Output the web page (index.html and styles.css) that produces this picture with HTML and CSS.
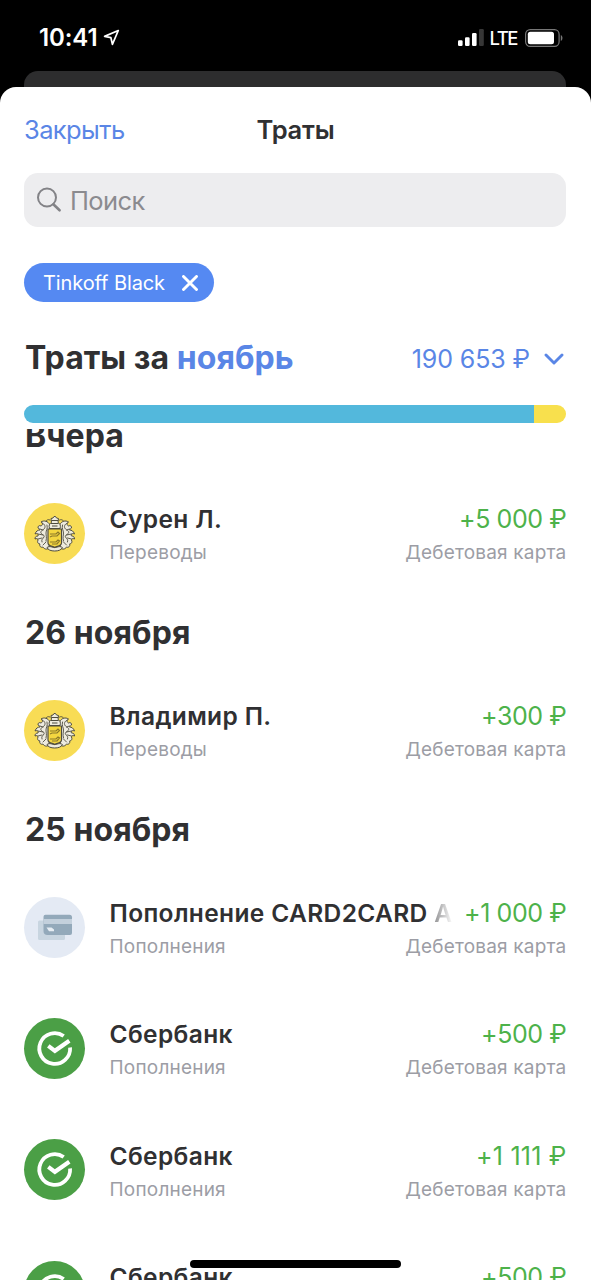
FILE: index.html
```html
<!DOCTYPE html>
<html lang="ru">
<head>
<meta charset="utf-8">
<title>Траты</title>
<link rel="stylesheet" href="styles.css">
</head>
<body>
<svg class="defs" aria-hidden="true">
  <symbol id="wing" viewBox="0 0 61 61" overflow="visible">
    <path d="M26 22c-2-4-6-5-9-3 2 1 2 3 0 4-2-1-3 0-3 2 1 1 2 1 2 2-2 0-4 1-5 4 2-1 4 0 3 2-2 0-3 1-3 3 2-1 3 0 3 1-1 2 0 4 2 4-1 2 1 4 3 3 1 2 4 3 6 1z" fill="#eeebdf" stroke="#4f4d40" stroke-width="1" stroke-linejoin="round"/>
    <path d="M18 20c3 1 4 4 2 6s-4 2-3 4 4 2 3 4-3 2-2 5M23 22c1 4-1 5-1 8s1 4 0 8M14 31l5 1M14 36l4-1M16 26l3 1M19 42l3-3M26 17c-2-1-3 0-4 1" fill="none" stroke="#4f4d40" stroke-width=".9" stroke-linecap="round"/>
  </symbol>
  <symbol id="crest" viewBox="0 0 61 61">
    <use href="#wing" width="61" height="61"/>
    <use href="#wing" width="61" height="61" transform="translate(61.500 0) scale(-1 1)"/>
    <g fill="#eeebdf" stroke="#4f4d40" stroke-width="1" stroke-linejoin="round">
      <path d="M25.500 25.500c-1-3 0-5 2-6l-.5-4 2-.5 1-1.500h1.500l1 1.500 2 .5-.5 4c2 1 3 3 2 6z"/>
      <path d="M27.500 17.500h6.500M27 20.500h7.500M28 23h5.500" fill="none"/>
      <path d="M23 44.500c3-2 5 0 7.700 0s4.700-2 7.700 0c-1 2.500-4 3.500-7.700 3.500s-6.700-1-7.700-3.500z"/>
    </g>
    <path d="M24 26h13.500v14c0 3-4 3-6.750 4.500C28 43 24 43 24 40z" fill="#f3d640" stroke="#4f4d40" stroke-width="1.200"/>
    <path d="M26 31h6l2-2 1.500 1.500L33 33h-5l-2 1M26 39h6l2-2 1.500 1-2.500 3h-5" fill="none" stroke="#8b7928" stroke-width="1.200"/>
  </symbol>
  <symbol id="cards" viewBox="0 0 61 61">
    <rect x="14" y="23.500" width="27" height="19.500" rx="1.500" fill="#c8d5e0"/>
    <path d="M21.500 17.700h24a2.500 2.500 0 0 1 2.500 2.500v15.800a2 2 0 0 1-2 2H23.500a4 4 0 0 1-4-4V19.700a2 2 0 0 1 2-2z" fill="#93a9ba"/>
    <path d="M19.500 22H48v5H19.500z" fill="#c3d0dc"/>
    <path d="M22.500 30.500h5l2.500 2v1.800h-5z" fill="#e6edf3"/>
  </symbol>
  <symbol id="sber" viewBox="0 0 61 61">
    <g fill="none" stroke="#fff" stroke-width="3.800">
      <path d="M39.700 18A15.400 15.400 0 1 0 46.100 29.500"/>
      <path d="M24.300 27.800l6.600 5 14.400-10" stroke-width="4.200"/>
    </g>
  </symbol>
</svg>

<div class="screen">
  <header class="status">
    <div class="status-left">
      <span class="time">10:41</span>
      <svg class="location" viewBox="0 0 17 17"><path d="M15.300 1.500L1.600 7.400l6.300 1.300 1.500 6.600z" fill="none" stroke="#fff" stroke-width="1.700" stroke-linejoin="round"/></svg>
    </div>
    <div class="status-right">
      <svg class="signal" viewBox="0 0 26 18"><g fill="#fff"><rect y="11.300" width="4.600" height="5.700" rx="1.200"/><rect x="7" y="8.300" width="4.600" height="8.700" rx="1.200"/><rect x="14" y="4" width="4.600" height="13" rx="1.200"/></g><rect x="21" width="4.800" height="17" rx="1.200" fill="#363636"/></svg>
      <span class="network">LTE</span>
      <svg class="battery" viewBox="0 0 38 18"><rect x=".6" y=".6" width="33.500" height="16.800" rx="4.600" fill="none" stroke="#777" stroke-width="1.200"/><rect x="2.800" y="2.800" width="26.200" height="12.400" rx="2.500" fill="#fff"/><path d="M35.800 6v6c2.200-1 2.200-5 0-6z" fill="#777"/></svg>
    </div>
  </header>
  <div class="peek"></div>

  <main class="sheet">
    <nav class="nav">
      <a class="close">Закрыть</a>
      <h1 class="title">Траты</h1>
    </nav>
    <div class="search">
      <svg class="search-icon" viewBox="0 0 26 26"><circle cx="11" cy="10.500" r="9" fill="none" stroke="#838387" stroke-width="2"/><path d="M17.300 17.300l6.300 6" stroke="#838387" stroke-width="2.600" stroke-linecap="round"/></svg>
      <span class="placeholder">Поиск</span>
    </div>
    <div class="chip">
      <span class="chip-label">Tinkoff Black</span>
      <svg class="chip-x" viewBox="0 0 16 16"><path d="M1.500 1.500l13 13M14.500 1.500l-13 13" stroke="#fff" stroke-width="2.900" stroke-linecap="round"/></svg>
    </div>
    <div class="summary">
      <h2 class="period">Траты за <span class="month">ноябрь</span></h2>
      <div class="total"><span class="total-sum">190 653 ₽</span>
        <svg class="chevron" viewBox="0 0 20 12"><path d="M2 2l8 8 8-8" fill="none" stroke="#5a86e6" stroke-width="2.900" stroke-linecap="round" stroke-linejoin="round"/></svg>
      </div>
    </div>
    <div class="bar"><i class="bar-main"></i><i class="bar-rest"></i></div>

    <section class="feed">
      <h3 class="day day-first">Вчера</h3>
      <article class="row">
        <svg class="avatar yellow"><use href="#crest"/></svg>
        <div class="info">
          <div class="line"><span class="name">Сурен Л.</span><span class="amount">+5 000 ₽</span></div>
          <div class="line sub"><span>Переводы</span><span>Дебетовая карта</span></div>
        </div>
      </article>
      <h3 class="day">26 ноября</h3>
      <article class="row">
        <svg class="avatar yellow"><use href="#crest"/></svg>
        <div class="info">
          <div class="line"><span class="name">Владимир П.</span><span class="amount">+300 ₽</span></div>
          <div class="line sub"><span>Переводы</span><span>Дебетовая карта</span></div>
        </div>
      </article>
      <h3 class="day">25 ноября</h3>
      <article class="row">
        <svg class="avatar pale"><use href="#cards"/></svg>
        <div class="info">
          <div class="line"><span class="name">Пополнение CARD2CARD <span class="fade">A</span></span><span class="amount">+1 000 ₽</span></div>
          <div class="line sub"><span>Пополнения</span><span>Дебетовая карта</span></div>
        </div>
      </article>
      <article class="row">
        <svg class="avatar green"><use href="#sber"/></svg>
        <div class="info">
          <div class="line"><span class="name">Сбербанк</span><span class="amount">+500 ₽</span></div>
          <div class="line sub"><span>Пополнения</span><span>Дебетовая карта</span></div>
        </div>
      </article>
      <article class="row">
        <svg class="avatar green"><use href="#sber"/></svg>
        <div class="info">
          <div class="line"><span class="name">Сбербанк</span><span class="amount ones">+1 111 ₽</span></div>
          <div class="line sub"><span>Пополнения</span><span>Дебетовая карта</span></div>
        </div>
      </article>
      <article class="row">
        <svg class="avatar green"><use href="#sber"/></svg>
        <div class="info">
          <div class="line"><span class="name">Сбербанк</span><span class="amount">+500 ₽</span></div>
        </div>
      </article>
    </section>
  </main>
  <div class="home"></div>
</div>
</body>
</html>
```

FILE: styles.css
```css
* { box-sizing: border-box; }
html, body { margin: 0; background: #000; }
body { font-family: Inter, "Liberation Sans", sans-serif; color: #303032; }
h1, h2, h3 { margin: 0; }
svg { display: block; flex: none; }
.defs { position: absolute; width: 0; height: 0; }
.screen { position: relative; width: 591px; height: 1280px; overflow: hidden; display: flex; flex-direction: column; }

.status { height: 71px; padding: 0 28px 0 39px; display: flex; justify-content: space-between; color: #fff; flex: none; }
.status-left, .status-right { display: flex; align-items: center; height: 75px; }
.time { font-size: 24px; font-weight: 600; letter-spacing: -0.1px; }
.location { width: 17px; height: 17px; margin-left: 5px; }
.signal { width: 26px; height: 18px; }
.network { font-size: 18.500px; font-weight: 500; margin-left: 6px; letter-spacing: -1.500px; }
.battery { width: 38px; height: 18px; margin-left: 8px; }
.peek { height: 16px; margin: 0 25px 0 24px; background: #2d2d2e; border-radius: 14px 14px 0 0; flex: none; }

.sheet { flex: 1; min-height: 0; background: #fff; border-radius: 16px 16px 0 0; display: flex; flex-direction: column; overflow: hidden; }
.nav { height: 86px; padding: 0 24px 2px; display: grid; grid-template-columns: 1fr auto 1fr; align-items: center; flex: none; }
.close { font-size: 25.500px; letter-spacing: -0.600px; color: #5a86e6; }
.title { font-size: 25.500px; font-weight: 600; letter-spacing: -0.200px; }
.search { height: 54px; margin: 0 25px 0 24px; padding-left: 12px; display: flex; align-items: center; gap: 8px; border-radius: 14px; background: #ededef; flex: none; }
.search-icon { width: 26px; height: 26px; }
.placeholder { font-size: 25.500px; letter-spacing: -0.600px; color: #8b8b8f; }
.chip { align-self: flex-start; width: 190px; height: 39px; margin: 36px 0 0 24px; padding: 0 16px 0 19px; display: flex; align-items: center; justify-content: space-between; border-radius: 20px; background: #5589f2; color: #fff; flex: none; }
.chip-label { font-size: 20px; letter-spacing: -0.100px; white-space: nowrap; }
.chip-x { width: 16px; height: 16px; }
.summary { height: 103px; padding: 10px 27px 0 25px; display: flex; align-items: center; justify-content: space-between; white-space: nowrap; flex: none; }
.period { position: relative; top: -1px; font-size: 32px; font-weight: 700; letter-spacing: 0.050px; }
.month { color: #5a86e6; }
.total { display: flex; align-items: center; gap: 14px; color: #5a86e6; font-size: 25px; }
.total-sum { letter-spacing: -0.100px; }
.chevron { width: 20px; height: 12px; }
.bar { height: 18px; margin: 0 25px 0 24px; display: flex; border-radius: 9px; overflow: hidden; flex: none; }
.bar-main { flex: 1; background: #53b8dc; }
.bar-rest { width: 32.500px; background: #f8e04d; }

.feed { flex: 1; min-height: 0; margin-top: 6px; overflow: hidden; }
.day { height: 75.700px; padding-left: 25px; line-height: 77px; font-size: 32px; font-weight: 700; letter-spacing: 0.080px; white-space: nowrap; }
.day-first { margin-top: -32px; }
.row { height: 121.300px; padding: 0 24.500px 0 24px; display: flex; align-items: center; }
.avatar { width: 61px; height: 61px; border-radius: 50%; }
.yellow { background: #f8dc55; }
.pale { background: #e4eaf4; }
.green { background: #4b9f46; }
.info { flex: 1; height: 64.600px; margin-left: 24.500px; }
.line { display: flex; justify-content: space-between; height: 36px; line-height: 36px; white-space: nowrap; }
.name { font-size: 24.500px; font-weight: 600; letter-spacing: 0.370px; }
.fade { background: linear-gradient(90deg, #909092 0%, #f4f4f4 95%); -webkit-background-clip: text; background-clip: text; color: transparent; }
.amount { font-size: 25px; letter-spacing: -0.400px; color: #4db24a; }
.ones { letter-spacing: 0.200px; }
.sub { height: 31px; line-height: 31px; font-size: 19px; letter-spacing: 0.200px; color: #9c9da5; }
.home { position: absolute; left: 190px; bottom: 12.500px; width: 211px; height: 8px; border-radius: 4px; background: #000; }
```
